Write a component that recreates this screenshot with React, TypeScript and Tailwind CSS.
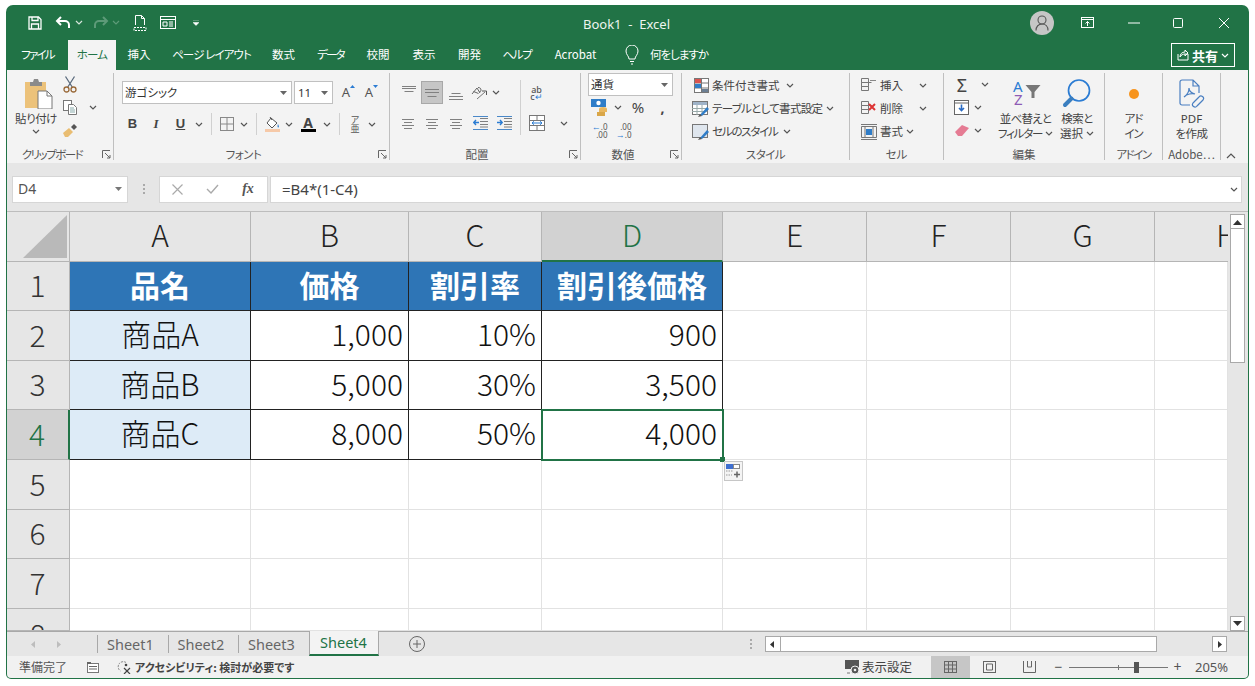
import type { ReactNode } from 'react';

const jp = "font-['Noto_Sans_CJK_JP','Noto_Sans',sans-serif] [font-feature-settings:'palt']";

const tabs = [
  { label: 'ファイル', w: 'w-[61px]', t: 'tracking-[-1.75px]' },
  { label: 'ホーム', w: 'w-[48px]', t: 'tracking-[-0.8px]', active: true },
  { label: '挿入', w: 'w-[46px]', t: '' },
  { label: 'ページ レイアウト', w: 'w-[99px]', t: 'tracking-[-0.9px]' },
  { label: '数式', w: 'w-[45px]', t: '' },
  { label: 'データ', w: 'w-[49px]', t: 'tracking-[-1.8px]' },
  { label: '校閲', w: 'w-[46px]', t: '' },
  { label: '表示', w: 'w-[46px]', t: '' },
  { label: '開発', w: 'w-[45px]', t: '' },
  { label: 'ヘルプ', w: 'w-[50px]', t: 'tracking-[-1.2px]' },
  { label: 'Acrobat', w: 'w-[67px]', t: '' },
];

const Chev = ({ c = '#555' }: { c?: string }) => (
  <svg width="8" height="5" viewBox="0 0 8 5" className="shrink-0">
    <path d="M1 1l3 3 3-3" fill="none" stroke={c} strokeWidth="1.2" />
  </svg>
);

const Slot = ({ w, children }: { w: string; children?: ReactNode }) => (
  <div className={`${w} h-full flex items-center justify-center shrink-0`}>{children}</div>
);

const VSep = () => <div className="w-px h-[22px] bg-[#d0d0d0] shrink-0" />;

const Launcher = () => (
  <svg width="9" height="9" viewBox="0 0 9 9" className="absolute right-[2px] top-[1px]">
    <path d="M.5 8V.5H8M3 3l5 5M8 5v3H5" fill="none" stroke="#666" strokeWidth="1" />
  </svg>
);

const Group = ({
  w,
  label,
  labelCls = '',
  launcher,
  children,
}: {
  w: string;
  label: string;
  labelCls?: string;
  launcher?: boolean;
  children: ReactNode;
}) => (
  <section className={`${w} shrink-0 flex flex-col border-r border-[#bfbfbf] mt-[3px] h-[87px]`}>
    <div className="h-[76px] relative">{children}</div>
    <div
      className={`h-[11px] relative flex items-center justify-center text-[11.5px] leading-none text-[#555] whitespace-nowrap ${
        launcher ? 'pr-[16px]' : ''
      } ${labelCls}`}
    >
      {label}
      {launcher && <Launcher />}
    </div>
  </section>
);

// 配置の横線アイコン
const Lines = ({ rows, w = 14 }: { rows: [number, number][]; w?: number }) => (
  <svg width={w} height="16" viewBox={`0 0 ${w} 16`}>
    {rows.map(([y, len], i) => (
      <path key={i} d={`M${(w - len) / 2} ${y + 0.5}h${len}`} stroke="#808080" strokeWidth="1" />
    ))}
  </svg>
);

const PasteIcon = () => (
  <svg width="28" height="31" viewBox="0 0 28 31">
    <rect x="0" y="4" width="21" height="26" fill="#ecc27a" />
    <path d="M5 4h3l1-3h4l1 3h3v4H5z" fill="#8b8b8b" />
    <path d="M13 13h9l5 5v13H13z" fill="#fff" stroke="#777" />
    <path d="M22 13v5h5" fill="none" stroke="#777" />
  </svg>
);

const CutIcon = () => (
  <svg width="14" height="17" viewBox="0 0 14 17" fill="none" stroke="#5b6b7d" strokeWidth="1.3">
    <path d="M2.5 .5l7 11M11.500 .5l-7 11" />
    <circle cx="3.500" cy="13.500" r="2.500" stroke="#9a6a3a" />
    <circle cx="10.500" cy="13.500" r="2.500" stroke="#9a6a3a" />
  </svg>
);

const CopyIcon = () => (
  <svg width="14" height="15" viewBox="0 0 14 15" fill="#fff" stroke="#777">
    <rect x=".5" y=".5" width="8" height="10" />
    <path d="M5.500 4.500h5l3 3v7h-8z" />
    <path d="M7 8h4M7 10h5M7 12h5" stroke="#8aa" />
  </svg>
);

const BrushIcon = () => (
  <svg width="15" height="13" viewBox="0 0 15 13">
    <path d="M0 9l6-5 4 4-5 5H2z" fill="#e9bd72" />
    <path d="M8 3l3-3 3 3-3 3z" fill="#555" />
  </svg>
);

const FontSizeA = ({ up }: { up?: boolean }) => (
  <div className="w-[23px] flex justify-center items-start relative text-[13px] leading-none text-[#555] font-['Noto_Sans',sans-serif]">
    A
    <svg width="5" height="4" viewBox="0 0 5 4" className="mt-[-1px]">
      <path d={up ? 'M0 3l2.500-3 2.500 3z' : 'M0 0h5L2.500 3z'} fill="#2b7cd3" />
    </svg>
  </div>
);

const BorderIcon = () => (
  <svg width="14" height="14" viewBox="0 0 14 14" fill="none" stroke="#888">
    <rect x=".5" y=".5" width="13" height="13" />
    <path d="M7 0v14M0 7h14" />
  </svg>
);

const FillIcon = () => (
  <svg width="16" height="16" viewBox="0 0 16 16">
    <path d="M6 2l6 5-5 5-5-5z" fill="#fff" stroke="#555" />
    <path d="M5 1l2 3" stroke="#555" />
    <path d="M13 8c1 2 1.500 3 .5 3.500S12 10 13 8z" fill="#4f8fd0" />
    <rect x="0" y="13" width="15" height="3" fill="#f6c9a8" />
  </svg>
);

const FontColorIcon = () => (
  <div className="flex flex-col items-center w-[15px]">
    <span className="text-[14px] leading-[13px] font-bold text-[#444] font-['Noto_Sans',sans-serif]">A</span>
    <div className="w-[15px] h-[3px] bg-black" />
  </div>
);

const OrientIcon = () => (
  <svg width="18" height="14" viewBox="0 0 18 14" fill="none" stroke="#666">
    <path d="M1 8l5-6 3 5M2.500 5.500l5 2" />
    <path d="M7 1.500c2 0 3 1 3 2.500s-1 2-2 2" stroke="#666" />
    <path d="M6 13l8-7" stroke="#777" />
    <path d="M11 5h4.500v4" stroke="#555" />
  </svg>
);

const IndentIcon = ({ out }: { out?: boolean }) => (
  <svg width="15" height="14" viewBox="0 0 15 14" fill="none">
    <path d="M7 2.500h8M7 5.500h8M7 8.500h8M7 11h8" stroke="#808080" />
    <path d={out ? 'M6 6.500H1M3 4L.8 6.500 3 9' : 'M0 6.500h5M3 4l2.200 2.500L3 9'} stroke="#2b7cd3" strokeWidth="1.400" />
    <path d="M0 13.500h15M0 .5h15" stroke="#4a88c8" />
  </svg>
);

const MergeIcon = () => (
  <svg width="16" height="16" viewBox="0 0 16 16" fill="#fff" stroke="#777">
    <rect x=".5" y=".5" width="15" height="15" />
    <path d="M0 5.500h16M0 10.500h16M8 0v5M8 11v5" />
    <path d="M3 8h10M5 6.300L3 8l2 1.700M11 6.300L13 8l-2 1.700" stroke="#2b7cd3" fill="none" />
  </svg>
);

const AccountingIcon = () => (
  <svg width="17" height="17" viewBox="0 0 17 17">
    <rect x="0" y="0" width="15" height="8" fill="#2f7dc8" />
    <circle cx="7.500" cy="4" r="2.200" fill="#fff" />
    <ellipse cx="12" cy="10" rx="4" ry="2" fill="#e9b75e" />
    <rect x="8" y="10" width="8" height="3" fill="#e9b75e" />
    <rect x="6" y="13" width="8" height="4" fill="#d9a648" />
  </svg>
);

const DecimalIcon = ({ more }: { more?: boolean }) => (
  <div className="flex flex-col items-end text-[8px] leading-[7px] text-[#555] font-['Noto_Sans',sans-serif] w-[15px]">
    <div className="flex items-center">
      {!more && <span className="text-[#2b7cd3] text-[9px] leading-[7px] font-bold">←</span>}
      <span>{more ? '.00' : '.0'}</span>
    </div>
    <div className="flex items-center mt-[1px]">
      {more && <span className="text-[#2b7cd3] text-[9px] leading-[7px] font-bold">→</span>}
      <span>{more ? '.0' : '.00'}</span>
    </div>
  </div>
);

const CondIcon = () => (
  <svg width="15" height="15" viewBox="0 0 15 15" fill="#fff" stroke="#777">
    <rect x=".5" y=".5" width="14" height="14" />
    <path d="M7.500 0v15M0 5h15M0 10h15" />
    <rect x="1" y="1" width="6" height="4" fill="#d9534f" stroke="none" />
    <rect x="1" y="6" width="6" height="4" fill="#2f7dc8" stroke="none" />
    <rect x="8" y="11" width="6" height="3" fill="#6b7f94" stroke="none" />
  </svg>
);

const TableStyleIcon = ({ cell }: { cell?: boolean }) => (
  <svg width="18" height="16" viewBox="0 0 18 16">
    <rect x=".5" y=".5" width="15" height="13" fill="#fff" stroke="#777" />
    <rect x="1" y="1" width="14" height={cell ? 12 : 3} fill={cell ? '#dfe6ee' : '#9fb3c8'} />
    {!cell && <path d="M0 7.500h15M0 10.500h15M5 4v10M10 4v10" stroke="#9aa" />}
    <path d="M8 14l7-8 2 2-7 7z" fill="#2f7dc8" />
    <path d="M6 16l2-3 2 2z" fill="#555" />
  </svg>
);

const CellInsert = ({ del }: { del?: boolean }) => (
  <svg width="16" height="15" viewBox="0 0 16 15" fill="none" stroke="#777">
    <path d="M.5.500h7v4h-7zM.5 4.500h7v4h-7zM.5 8.500h7v4h-7zM7.500 4.500h3" />
    {del ? (
      <path d="M8 3l6 6M14 3l-6 6" stroke="#d33" strokeWidth="2" />
    ) : (
      <path d="M9 2.500h6" stroke="#888" />
    )}
  </svg>
);

const FormatCell = () => (
  <svg width="16" height="16" viewBox="0 0 16 16" fill="none" stroke="#777">
    <path d="M.5 2.500h15v11H.5zM0 .5h16M0 15.500h16M4 2v12M12 2v12" />
    <rect x="5" y="5" width="6" height="6" fill="#2f7dc8" stroke="none" />
  </svg>
);

const SortIcon = () => (
  <svg width="30" height="28" viewBox="0 0 30 28" className="overflow-visible">
    <text x="2" y="13" fontSize="15" fontFamily="Noto Sans" fill="#2b7cd3">A</text>
    <text x="3" y="26" fontSize="15" fontFamily="Noto Sans" fill="#8e5bb5">Z</text>
    <path d="M14.500 6h15l-6 7v6h-3v-6z" fill="#777" />
  </svg>
);

const SearchIcon = () => (
  <svg width="30" height="29" viewBox="0 0 30 29" fill="none">
    <circle cx="17" cy="11.500" r="10.500" stroke="#2b7cd3" strokeWidth="1.700" />
    <path d="M9.500 19.500L3 26" stroke="#3a7ebf" strokeWidth="4" strokeLinecap="round" />
  </svg>
);

const PdfIcon = () => (
  <svg width="27" height="29" viewBox="0 0 27 29" fill="none" stroke="#4a7fc1" strokeWidth="1.200">
    <path d="M12 26H4a2 2 0 0 1-2-2V3a2 2 0 0 1 2-2h11l6 6v7M15 1v6h6" />
    <path d="M6 18c3-2 5-5 5-9 0 4 3 5 6 6-3-1-8 0-11 3z" />
    <path d="M15 24l6-6a2.500 2.500 0 0 1 4 3l-6 6a2.500 2.500 0 0 1-4-3z" />
  </svg>
);

const RowLine = ({
  icon,
  label,
  cls = '',
  chevPad,
}: {
  icon: ReactNode;
  label: string;
  cls?: string;
  chevPad: string;
}) => (
  <div className="h-[23px] flex items-center">
    <div className="w-[18px] flex justify-center shrink-0">{icon}</div>
    <span className={`ml-[2px] text-[11.5px] leading-none text-[#444] whitespace-nowrap ${cls}`}>{label}</span>
    <div className={chevPad}>
      <Chev />
    </div>
  </div>
);

const colHeads = ['A', 'B', 'C', 'D', 'E', 'F', 'G'];

const tableRows = [
  ['品名', '価格', '割引率', '割引後価格'],
  ['商品A', '1,000', '10%', '900'],
  ['商品B', '5,000', '30%', '3,500'],
  ['商品C', '8,000', '50%', '4,000'],
];

const rowHeadCls = (active: boolean) =>
  `flex items-center justify-center pr-[1px] pb-[4px] text-[30px] leading-none font-light border-b border-r border-[#b5b5b5] overflow-hidden ${
    active ? 'bg-[#d2d2d2] text-[#217346] border-r-2 border-r-[#217346]' : 'bg-[#e6e6e6] text-[#333]'
  }`;

const Sheet = () => (
  <div
    className={`flex-1 grid grid-cols-[63px_181px_158px_133px_181px_144px_144px_144px_73px] grid-rows-[50px_49px_50px_49px_50px_50px_49px_50px_22px] overflow-hidden ${jp}`}
  >
    {/* 列見出し */}
    <div className="bg-[#e6e6e6] border-r border-b border-[#b5b5b5] flex items-end justify-end pr-[2px] pb-[3px]">
      <svg width="44" height="43" viewBox="0 0 44 43">
        <path d="M44 0v43H0z" fill="#b9b9b9" />
      </svg>
    </div>
    {colHeads.map((c) => (
      <div
        key={c}
        className={`flex items-center justify-center pb-[5px] text-[30px] leading-none overflow-hidden font-light ${
          c === 'D'
            ? 'bg-[#d2d2d2] text-[#217346] border-b-2 border-[#217346] border-r border-r-[#b5b5b5]'
            : 'bg-[#e6e6e6] text-[#222] border-b border-r border-[#b5b5b5]'
        }`}
      >
        {c}
      </div>
    ))}
    <div className="bg-[#e6e6e6] border-b border-[#b5b5b5] flex items-center pb-[5px] text-[30px] leading-none font-light text-[#222] overflow-hidden">
      <span className="w-[144px] shrink-0 text-center">H</span>
    </div>

    {/* 表のデータ */}
    {tableRows.map((row, r) => (
      <div key={r} className="contents">
        <div className={rowHeadCls(r === 3)}>{r + 1}</div>
        {row.map((v, c) => {
          const head = r === 0;
          const first = c === 0;
          const active = r === 3 && c === 3;
          return (
            <div
              key={c}
              className={`relative flex items-center text-[30px] leading-none whitespace-nowrap border-r border-b border-[#222] ${
                head
                  ? 'bg-[#2e75b6] text-white font-bold justify-center pb-[4px]'
                  : first
                    ? 'bg-[#ddebf7] text-[#111] font-light justify-center pb-[5px]'
                    : 'bg-white text-[#111] font-light justify-end pr-[5px] pb-[5px]'
              } ${active ? 'outline-2 -outline-offset-1 outline-[#217346] z-10' : ''}`}
            >
              {v}
              {active && (
                <>
                  <div className="absolute right-[-3px] bottom-[-3px] w-[5px] h-[5px] bg-[#217346] border-0" />
                  <div className="absolute left-[182px] top-[51px] w-[19px] h-[20px] bg-[#f4f4f4] border border-[#c6c6c6] flex items-center justify-center">
                    <svg width="15" height="14" viewBox="0 0 15 14">
                      <rect x="0" y="0" width="7" height="5" fill="#3f6fd0" />
                      <rect x="7.500" y=".5" width="6" height="4" fill="#fff" stroke="#888" />
                      <path d="M0 7h7M0 11h6" stroke="#999" strokeDasharray="1.500 1" />
                      <path d="M8 10.500h6M11 7.500v6" stroke="#666" strokeWidth="1.500" />
                    </svg>
                  </div>
                </>
              )}
            </div>
          );
        })}
        {[0, 1, 2, 3].map((i) => (
          <div key={i} className="bg-white border-r border-b border-[#e2e2e2]" />
        ))}
      </div>
    ))}

    {/* 空の行 */}
    {[5, 6, 7, 8].map((n) => (
      <div key={n} className="contents">
        <div className={n === 8 ? `${rowHeadCls(false)} !items-start !pb-0 pt-[9px]` : rowHeadCls(false)}>{n}</div>
        {[0, 1, 2, 3, 4, 5, 6, 7].map((i) => (
          <div key={i} className="bg-white border-r border-b border-[#e2e2e2]" />
        ))}
      </div>
    ))}
  </div>
);

const ScrollBtn = ({ d }: { d: string }) => (
  <div className="w-[15px] h-[15px] bg-white border border-[#a9a9a9] flex items-center justify-center shrink-0">
    <svg width="9" height="6" viewBox="0 0 9 6">
      <path d={d} fill="#333" />
    </svg>
  </div>
);

export default function App() {
  return (
    <div className="w-[1255px] h-[686px] bg-white pt-[5px] pl-[6px] overflow-hidden">
      <div className={`w-[1243px] h-[674px] bg-[#217346] rounded-t-[7px] rounded-b-[5px] px-px pb-px flex flex-col overflow-hidden ${jp}`}>
        {/* タイトルバー */}
        <header className="h-[35px] flex items-center relative text-white shrink-0">
          <div className="flex items-center pl-[21px]">
            <svg width="14" height="14" viewBox="0 0 14 14" fill="none" stroke="#fff" strokeWidth="1.300">
              <path d="M1 1h9.500L13 3.500V13H1z" />
              <path d="M4 1v3.500h6V1M3.500 13V8h7v5" />
            </svg>
            <svg width="16" height="13" viewBox="0 0 16 13" fill="none" stroke="#fff" strokeWidth="2" className="ml-[13px]">
              <path d="M6 1L2 5l4 4M2 5h8a4 4 0 0 1 4 4v3" />
            </svg>
            <div className="ml-[4px]"><Chev c="#d5e4da" /></div>
            <svg width="16" height="13" viewBox="0 0 16 13" fill="none" stroke="#5d9a78" strokeWidth="2" className="ml-[10px]">
              <path d="M10 1l4 4-4 4M14 5H6a4 4 0 0 0-4 4v3" />
            </svg>
            <div className="ml-[3px]"><Chev c="#5d9a78" /></div>
            <svg width="14" height="16" viewBox="0 0 14 16" fill="none" stroke="#fff" className="ml-[13px]">
              <path d="M2.500 10V.5h6l3 3V10M8.500.5v3h3" />
              <path d="M1 12.500h12v3H1z" strokeDasharray="2 1" />
            </svg>
            <svg width="16" height="13" viewBox="0 0 16 13" fill="none" stroke="#fff" className="ml-[13px]">
              <rect x=".5" y=".5" width="15" height="12" />
              <path d="M0 3.500h16M3 6h4v4H3zM9 6h4M9 8h4M9 10h4" />
            </svg>
            <svg width="6" height="6" viewBox="0 0 6 6" className="ml-[17px]">
              <path d="M0 0h6M0 2.500h6L3 5.500z" fill="#fff" stroke="#fff" strokeWidth=".5" />
            </svg>
          </div>
          <div className="absolute left-[576px] top-[11px] text-[13px] leading-[16px] text-[#eef5f0] whitespace-pre font-['Noto_Sans',sans-serif]">
            Book1  -  Excel
          </div>
          <div className="ml-auto flex items-center h-full pr-[19px]">
            <div className="w-[24px] h-[24px] rounded-full bg-[#c6c6c6] flex items-center justify-center">
              <svg width="14" height="16" viewBox="0 0 14 16" fill="none" stroke="#555" strokeWidth="1.100">
                <circle cx="7" cy="5" r="4" />
                <path d="M1 15.500c0-4 2.500-6.500 6-6.500s6 2.500 6 6.500" />
              </svg>
            </div>
            <svg width="13" height="11" viewBox="0 0 13 11" fill="none" stroke="#fff" className="ml-[27px]">
              <rect x=".5" y=".5" width="12" height="10" />
              <path d="M0 2.500h13M6.500 9V4.500M4.500 6.500l2-2 2 2" />
            </svg>
            <svg width="12" height="2" viewBox="0 0 12 2" className="ml-[34px]">
              <path d="M0 1h12" stroke="#fff" />
            </svg>
            <svg width="10" height="10" viewBox="0 0 10 10" fill="none" stroke="#fff" className="ml-[33px]">
              <rect x=".5" y=".5" width="9" height="9" rx="1" />
            </svg>
            <svg width="10" height="10" viewBox="0 0 10 10" fill="none" stroke="#fff" className="ml-[36px]">
              <path d="M0 0l10 10M10 0L0 10" />
            </svg>
          </div>
        </header>

        {/* タブ */}
        <nav className="h-[30px] flex items-stretch text-[11.5px] leading-none text-white shrink-0">
          {tabs.map((t) => (
            <div
              key={t.label}
              className={`${t.w} ${t.t} flex items-center justify-center whitespace-nowrap shrink-0 ${
                t.active ? 'bg-[#f3f3f3] text-[#217346]' : ''
              }`}
            >
              {t.label}
            </div>
          ))}
          <svg width="16" height="20" viewBox="0 0 16 20" fill="none" stroke="#fff" className="ml-[15px] self-center">
            <path d="M5 14c0-3-3-4-3-8a6 6 0 0 1 12 0c0 4-3 5-3 8zM6 16.500h4M7 19h2" />
          </svg>
          <span className="ml-[10px] self-center tracking-[-1px]">何をしますか</span>
          <div className="ml-auto mr-[13px] mt-[3px] mb-[3px] w-[64px] border border-white flex items-center justify-center gap-[3px]">
            <svg width="12" height="12" viewBox="0 0 12 12" fill="none" stroke="#fff">
              <path d="M1 5v6h10V5H8M3 8c0-3 2-5 5-5V1l3 3-3 3V5C6 5 4 6 3 8z" />
            </svg>
            <span className="font-bold text-[13px]">共有</span>
            <Chev c="#fff" />
          </div>
        </nav>

        {/* リボン */}
        <div className="h-[93px] bg-[#f3f3f3] flex shrink-0">
          <Group w="w-[107px]" label="クリップボード" labelCls="tracking-[-1.5px]" launcher>
            <div className="flex h-full">
              <div className="w-[58px] flex flex-col items-center pt-[5px] shrink-0">
                <div className="ml-[6px]"><PasteIcon /></div>
                <span className="mt-[3px] text-[11.5px] leading-[13px] text-[#444] tracking-[-0.5px]">貼り付け</span>
                <div className="mt-[4px]"><Chev /></div>
              </div>
              <div className="w-[20px] -ml-[5px] flex flex-col shrink-0">
                <div className="h-[23px] flex items-center justify-center"><CutIcon /></div>
                <div className="h-[23px] flex items-center justify-center"><CopyIcon /></div>
                <div className="h-[23px] flex items-center justify-center"><BrushIcon /></div>
              </div>
              <div className="w-[26px] h-[46px] flex items-end justify-center pb-[9px]"><Chev /></div>
            </div>
          </Group>

          <Group w="w-[276px]" label="フォント" labelCls="tracking-[-0.5px]" launcher>
            <div className="pl-[8px] pt-[8px]">
              <div className="h-[23px] flex items-center">
                <div className="w-[170px] h-[23px] bg-white border border-[#c0c0c0] flex items-center pl-[2px] text-[11.500px] leading-none text-[#333]">
                  游ゴシック
                  <svg width="7" height="4" viewBox="0 0 7 4" className="ml-auto mr-[4px]"><path d="M0 0h7L3.500 4z" fill="#666" /></svg>
                </div>
                <div className="ml-[2px] w-[39px] h-[23px] bg-white border border-[#c0c0c0] flex items-center pl-[3px] text-[11.500px] leading-none text-[#333] font-['Noto_Sans',sans-serif]">
                  11
                  <svg width="7" height="4" viewBox="0 0 7 4" className="ml-auto mr-[4px]"><path d="M0 0h7L3.500 4z" fill="#666" /></svg>
                </div>
                <div className="ml-[4px] flex"><FontSizeA up /><FontSizeA /></div>
              </div>
              <div className="h-[22px] mt-[9px] flex items-center text-[13px] text-[#444] font-['Liberation_Sans',sans-serif]">
                <Slot w="w-[21px]"><b>B</b></Slot>
                <Slot w="w-[26px]"><b className="font-['Liberation_Serif',serif] italic">I</b></Slot>
                <Slot w="w-[23px]"><b className="underline">U</b></Slot>
                <Slot w="w-[14px]"><Chev /></Slot>
                <Slot w="w-[10px]"><VSep /></Slot>
                <Slot w="w-[22px]"><BorderIcon /></Slot>
                <Slot w="w-[12px]"><Chev /></Slot>
                <Slot w="w-[12px]"><VSep /></Slot>
                <Slot w="w-[21px]"><FillIcon /></Slot>
                <Slot w="w-[11px]"><Chev /></Slot>
                <Slot w="w-[28px]"><FontColorIcon /></Slot>
                <Slot w="w-[10px]"><Chev /></Slot>
                <Slot w="w-[15px]"><VSep /></Slot>
                <Slot w="w-[16px]">
                  <span className={`text-[9px] leading-[9px] text-[#555] w-[10px] text-center ${jp}`}>ア<br />亜</span>
                </Slot>
                <Slot w="w-[18px]"><Chev /></Slot>
              </div>
            </div>
          </Group>

          <Group w="w-[191px]" label="配置" launcher>
            <div className="flex pl-[6px]">
              <div className="w-[125px] h-[55px] mt-[7px] border-r border-[#d0d0d0] shrink-0">
                <div className="h-[23px] mt-px flex items-center">
                  <Slot w="w-[25px]"><Lines rows={[[1, 14], [3, 14], [6, 9]]} /></Slot>
                  <Slot w="w-[22px]">
                    <div className="w-[22px] h-[23px] bg-[#c6c6c6] border border-[#a8a8a8] flex items-center justify-center">
                      <Lines rows={[[4, 14], [7, 14], [11, 9]]} />
                    </div>
                  </Slot>
                  <Slot w="w-[26px]"><Lines rows={[[8, 9], [11, 14], [14, 14]]} /></Slot>
                  <Slot w="w-[22px]"><OrientIcon /></Slot>
                  <Slot w="w-[10px]"><Chev /></Slot>
                </div>
                <div className="h-[22px] mt-[8px] flex items-center">
                  <Slot w="w-[24px]"><Lines w={12} rows={[[4, 12], [7, 8], [10, 12], [13, 8]]} /></Slot>
                  <Slot w="w-[24px]"><Lines w={12} rows={[[4, 12], [7, 8], [10, 12], [13, 8]]} /></Slot>
                  <Slot w="w-[24px]"><Lines w={12} rows={[[4, 12], [7, 8], [10, 12], [13, 8]]} /></Slot>
                  <Slot w="w-[24px]"><IndentIcon out /></Slot>
                  <Slot w="w-[24px]"><IndentIcon /></Slot>
                </div>
              </div>
              <div className="w-[45px] shrink-0 pt-[8px]">
                <div className="h-[23px] ml-[0px] w-[31px] flex items-center justify-center text-center">
                  <span className="text-[9px] leading-[7px] text-[#555] font-['Noto_Sans',sans-serif] font-medium">ab<br />c<span className="text-[#2b7cd3]">↵</span></span>
                </div>
                <div className="h-[22px] mt-[8px] flex items-center">
                  <Slot w="w-[31px]"><MergeIcon /></Slot>
                  <Slot w="w-[14px]"><div className="ml-[10px]"><Chev /></div></Slot>
                </div>
              </div>
            </div>
          </Group>

          <Group w="w-[101px]" label="数値" launcher>
            <div className="pl-[7px]">
              <div className="w-[85px] h-[23px] bg-white border border-[#c0c0c0] flex items-center pl-[2px] text-[11.500px] leading-none text-[#333]">
                通貨
                <svg width="7" height="4" viewBox="0 0 7 4" className="ml-auto mr-[4px]"><path d="M0 0h7L3.500 4z" fill="#666" /></svg>
              </div>
              <div className="h-[23px] flex items-center">
                <Slot w="w-[22px]"><AccountingIcon /></Slot>
                <Slot w="w-[16px]"><Chev /></Slot>
                <Slot w="w-[24px]"><span className="text-[15px] leading-none text-[#444] font-['Noto_Sans',sans-serif]">%</span></Slot>
                <Slot w="w-[25px]"><b className="text-[14px] leading-none text-[#444] font-['Noto_Sans',sans-serif]">,</b></Slot>
              </div>
              <div className="h-[23px] flex items-center">
                <Slot w="w-[24px]"><DecimalIcon /></Slot>
                <Slot w="w-[24px]"><DecimalIcon more /></Slot>
              </div>
            </div>
          </Group>

          <Group w="w-[168px]" label="スタイル" labelCls="tracking-[-0.5px]">
            <div className="pl-[10px] pt-px">
              <RowLine icon={<CondIcon />} label="条件付き書式" chevPad="ml-[6px]" />
              <RowLine icon={<TableStyleIcon />} label="テーブルとして書式設定" cls="tracking-[-0.7px]" chevPad="ml-[4px]" />
              <RowLine icon={<TableStyleIcon cell />} label="セルのスタイル" cls="tracking-[-1.2px]" chevPad="ml-[5px]" />
            </div>
          </Group>

          <Group w="w-[94px]" label="セル">
            <div className="pl-[10px] pt-px">
              <RowLine icon={<CellInsert />} label="挿入" chevPad="ml-[16px]" />
              <RowLine icon={<CellInsert del />} label="削除" chevPad="ml-[16px]" />
              <RowLine icon={<FormatCell />} label="書式" chevPad="ml-[3px]" />
            </div>
          </Group>

          <Group w="w-[161px]" label="編集">
            <div className="flex h-full">
              <div className="w-[52px] pl-[10px] flex flex-col shrink-0">
                <div className="h-[23px] flex items-center">
                  <span className="w-[16px] text-center text-[18px] leading-none text-[#444] font-['Noto_Sans',sans-serif]">Σ</span>
                  <div className="ml-[11px]"><Chev /></div>
                </div>
                <div className="h-[23px] flex items-center">
                  <svg width="16" height="16" viewBox="0 0 16 16" fill="#fff" stroke="#666" className="shrink-0">
                    <rect x=".5" y=".5" width="14" height="14" />
                    <path d="M0 3h15" />
                    <path d="M7.500 4.500v6M5 8l2.500 2.500L10 8" stroke="#2b6cc4" strokeWidth="1.600" fill="none" />
                  </svg>
                  <div className="ml-[4px]"><Chev /></div>
                </div>
                <div className="h-[23px] flex items-center">
                  <svg width="16" height="13" viewBox="0 0 16 13" className="shrink-0">
                    <path d="M1 8l7-7 7 3-7 8H4z" fill="#e57b93" />
                  </svg>
                  <div className="ml-[4px]"><Chev /></div>
                </div>
              </div>
              <div className="w-[53px] ml-[3px] flex flex-col items-center pt-[6px] text-[11.500px] leading-[15px] text-[#444] whitespace-nowrap shrink-0">
                <div className="h-[30px]"><SortIcon /></div>
                <span className="mt-[2px] tracking-[-0.8px]">並べ替えと</span>
                <span className="flex items-center gap-[3px] tracking-[-1.2px]">フィルター<Chev /></span>
              </div>
              <div className="w-[44px] ml-[3px] flex flex-col items-center pt-[6px] text-[11.500px] leading-[15px] text-[#444] whitespace-nowrap shrink-0">
                <div className="h-[30px]"><SearchIcon /></div>
                <span className="mt-[2px] tracking-[-0.5px]">検索と</span>
                <span className="flex items-center gap-[3px]">選択<Chev /></span>
              </div>
            </div>
          </Group>

          <Group w="w-[58px]" label="アドイン" labelCls="tracking-[-1.5px]">
            <div className="flex flex-col items-center pt-[6px] text-[11.500px] leading-[15px] text-[#444]">
              <div className="h-[30px] flex items-center justify-center">
                <div className="w-[10px] h-[10px] rounded-full bg-[#f7941d]" />
              </div>
              <span className="mt-[2px] tracking-[-1px]">アド</span>
              <span className="tracking-[-1px]">イン</span>
            </div>
          </Group>

          <Group w="w-[58px]" label="Adobe…">
            <div className="flex flex-col items-center pt-[6px] text-[11.500px] leading-[15px] text-[#444]">
              <div className="h-[30px]"><PdfIcon /></div>
              <span className="mt-[2px] font-['Noto_Sans',sans-serif]">PDF</span>
              <span className="tracking-[-0.5px]">を作成</span>
            </div>
          </Group>

          <div className="flex-1 flex items-end justify-center pb-[4px] pr-[8px]">
            <svg width="10" height="6" viewBox="0 0 10 6">
              <path d="M1 5l4-4 4 4" fill="none" stroke="#555" strokeWidth="1.200" />
            </svg>
          </div>
        </div>

        {/* 数式バー */}
        <div className="h-[49px] bg-[#e6e6e6] flex items-center pl-[5px] pr-[6px] shrink-0 border-b border-[#bdbdbd] pb-[2px] pt-[6px]">
          <div className="w-[116px] h-[27px] bg-white border border-[#d6d6d6] flex items-center pl-[5px] text-[14px] leading-none text-[#555] font-['Noto_Sans',sans-serif]">
            D4
            <svg width="7" height="4" viewBox="0 0 7 4" className="ml-auto mr-[5px]"><path d="M0 0h7L3.500 4z" fill="#777" /></svg>
          </div>
          <div className="w-[31px] flex flex-col items-center gap-[2px]">
            <div className="w-[2px] h-[2px] bg-[#aaa]" />
            <div className="w-[2px] h-[2px] bg-[#aaa]" />
            <div className="w-[2px] h-[2px] bg-[#aaa]" />
          </div>
          <div className="w-[109px] h-[27px] bg-white border border-[#d6d6d6] flex items-center">
            <Slot w="w-[35px]">
              <svg width="11" height="11" viewBox="0 0 11 11"><path d="M.5.500l10 10M10.500.500l-10 10" stroke="#aaa" strokeWidth="1.200" /></svg>
            </Slot>
            <Slot w="w-[34px]">
              <svg width="13" height="10" viewBox="0 0 13 10"><path d="M1 5l4 4 7-8" fill="none" stroke="#aaa" strokeWidth="1.400" /></svg>
            </Slot>
            <Slot w="w-[38px]">
              <span className="font-['Liberation_Serif',serif] italic font-bold text-[14px] leading-none text-[#555]">fx</span>
            </Slot>
          </div>
          <div className="ml-[2px] flex-1 h-[27px] bg-white border border-[#d6d6d6] flex items-center pl-[11px] text-[15px] leading-none text-[#444] font-['Noto_Sans',sans-serif]">
            =B4*(1-C4)
            <div className="ml-auto mr-[3px]"><Chev /></div>
          </div>
        </div>

        {/* シート */}
        <div className="h-[419px] flex shrink-0 bg-[#e6e6e6]">
          <Sheet />
          <div className="w-[20px] flex flex-col items-center pt-[2px] pr-[2px]">
            <ScrollBtn d="M0 6l4.500-5L9 6z" />
            <div className="w-[15px] h-[134px] bg-white border border-[#a9a9a9] border-t-0" />
            <div className="flex-1" />
            <ScrollBtn d="M0 0h9L4.500 5z" />
          </div>
        </div>

        {/* シートタブ */}
        <div className="h-[25px] bg-[#e6e6e6] border-t border-[#a8a8a8] flex items-stretch shrink-0 text-[14.5px] leading-none text-[#666] font-['Noto_Sans',sans-serif]">
          <div className="w-[90px] flex items-center pl-[24px] gap-[20px]">
            <svg width="5" height="7" viewBox="0 0 5 7"><path d="M4 0v7L0 3.500z" fill="#bdbdbd" /></svg>
            <svg width="5" height="7" viewBox="0 0 5 7"><path d="M1 0v7l4-3.500z" fill="#bdbdbd" /></svg>
          </div>
          {['Sheet1', 'Sheet2', 'Sheet3'].map((s) => (
            <div key={s} className="w-[70.500px] flex items-center pl-[9px] border-l border-[#a8a8a8] my-[3px]">{s}</div>
          ))}
          <div className="w-[70px] bg-[#f3f3f3] flex items-center justify-center text-[#217346] border-b-2 border-[#217346] border-x border-x-[#a8a8a8] -mt-px">Sheet4</div>
          <div className="ml-[30px] flex items-center">
            <svg width="16" height="16" viewBox="0 0 16 16" fill="none" stroke="#666">
              <circle cx="8" cy="8" r="7.500" />
              <path d="M8 4v8M4 8h8" />
            </svg>
          </div>
          <div className="ml-[321px] w-[10px] flex flex-col items-center justify-center gap-[2px]">
            <div className="w-[2px] h-[2px] bg-[#aaa]" />
            <div className="w-[2px] h-[2px] bg-[#aaa]" />
            <div className="w-[2px] h-[2px] bg-[#aaa]" />
          </div>
          <div className="ml-[9px] flex items-center">
            <div className="w-[16px] h-[16px] bg-white border border-[#a9a9a9] flex items-center justify-center">
              <svg width="5" height="7" viewBox="0 0 5 7"><path d="M4 0v7L0 3.500z" fill="#333" /></svg>
            </div>
            <div className="w-[376px] h-[16px] bg-white border border-[#a9a9a9] border-l-0" />
            <div className="ml-[55px] w-[15px] h-[16px] bg-white border border-[#a9a9a9] flex items-center justify-center">
              <svg width="5" height="7" viewBox="0 0 5 7"><path d="M1 0v7l4-3.500z" fill="#333" /></svg>
            </div>
          </div>
        </div>

        {/* ステータスバー */}
        <footer className="flex-1 bg-[#f1f1f1] flex items-stretch text-[12px] leading-none text-[#555] rounded-b-[4px] overflow-hidden pr-[13px]">
          <span className="ml-[12px] self-center">準備完了</span>
          <svg width="12" height="12" viewBox="0 0 12 12" className="ml-[20px] self-center">
            <rect x=".5" y="2.500" width="11" height="9" fill="#fff" stroke="#777" />
            <path d="M0 1h4v2H0zM2 5h8v1H2zM2 7.500h8v1H2z" fill="#666" />
          </svg>
          <svg width="16" height="14" viewBox="0 0 16 14" fill="none" className="ml-[18px] self-center">
            <path d="M9 2.500A5 5 0 1 0 3.500 11" stroke="#888" strokeDasharray="2 1" />
            <circle cx="9" cy="5" r="1.300" fill="#444" />
            <path d="M7 8l6 6M13 8l-6 6" stroke="#444" strokeWidth="1.200" />
          </svg>
          <span className="ml-[2px] self-center font-bold text-[11px] text-[#444]">アクセシビリティ: 検討が必要です</span>
          <svg width="16" height="15" viewBox="0 0 16 15" className="ml-auto self-center">
            <rect x="0" y="0" width="14" height="9" fill="#555" />
            <circle cx="10" cy="10" r="4" fill="#555" stroke="#f1f1f1" />
            <circle cx="10" cy="10" r="1.300" fill="#f1f1f1" />
            <path d="M2 13h3" stroke="#777" />
          </svg>
          <span className="ml-px self-center text-[12.500px] text-[#444]">表示設定</span>
          <div className="ml-[19px] w-[39px] bg-[#c6c6c6] flex items-center justify-center">
            <svg width="13" height="12" viewBox="0 0 13 12" fill="none" stroke="#666">
              <rect x=".5" y=".5" width="12" height="11" />
              <path d="M4.500 0v12M8.500 0v12M0 4h13M0 8h13" />
            </svg>
          </div>
          <div className="w-[39px] flex items-center justify-center">
            <svg width="13" height="12" viewBox="0 0 13 12" fill="none" stroke="#666">
              <rect x=".5" y=".5" width="12" height="11" />
              <path d="M3.500 3h6v6h-6z" />
            </svg>
          </div>
          <div className="w-[40px] flex items-center justify-center">
            <svg width="13" height="12" viewBox="0 0 13 12" fill="none" stroke="#666">
              <path d="M.5 0v11.500h12V0M4.500 0v6h4V0" />
            </svg>
          </div>
          <div className="ml-[5px] flex items-center font-['Noto_Sans',sans-serif] text-[#555] text-[14px]">
            <span className="w-[9px] text-center">−</span>
            <div className="ml-[6px] w-[99px] h-px bg-[#777] relative">
              <div className="absolute left-[49px] top-[-2px] w-px h-[5px] bg-[#777]" />
              <div className="absolute left-[65px] top-[-5px] w-[5px] h-[11px] bg-[#555]" />
            </div>
            <span className="ml-[5px] w-[9px] text-center">+</span>
            <span className="ml-[13px] w-[40px] text-[13px]">205%</span>
          </div>
        </footer>
      </div>
    </div>
  );
}
